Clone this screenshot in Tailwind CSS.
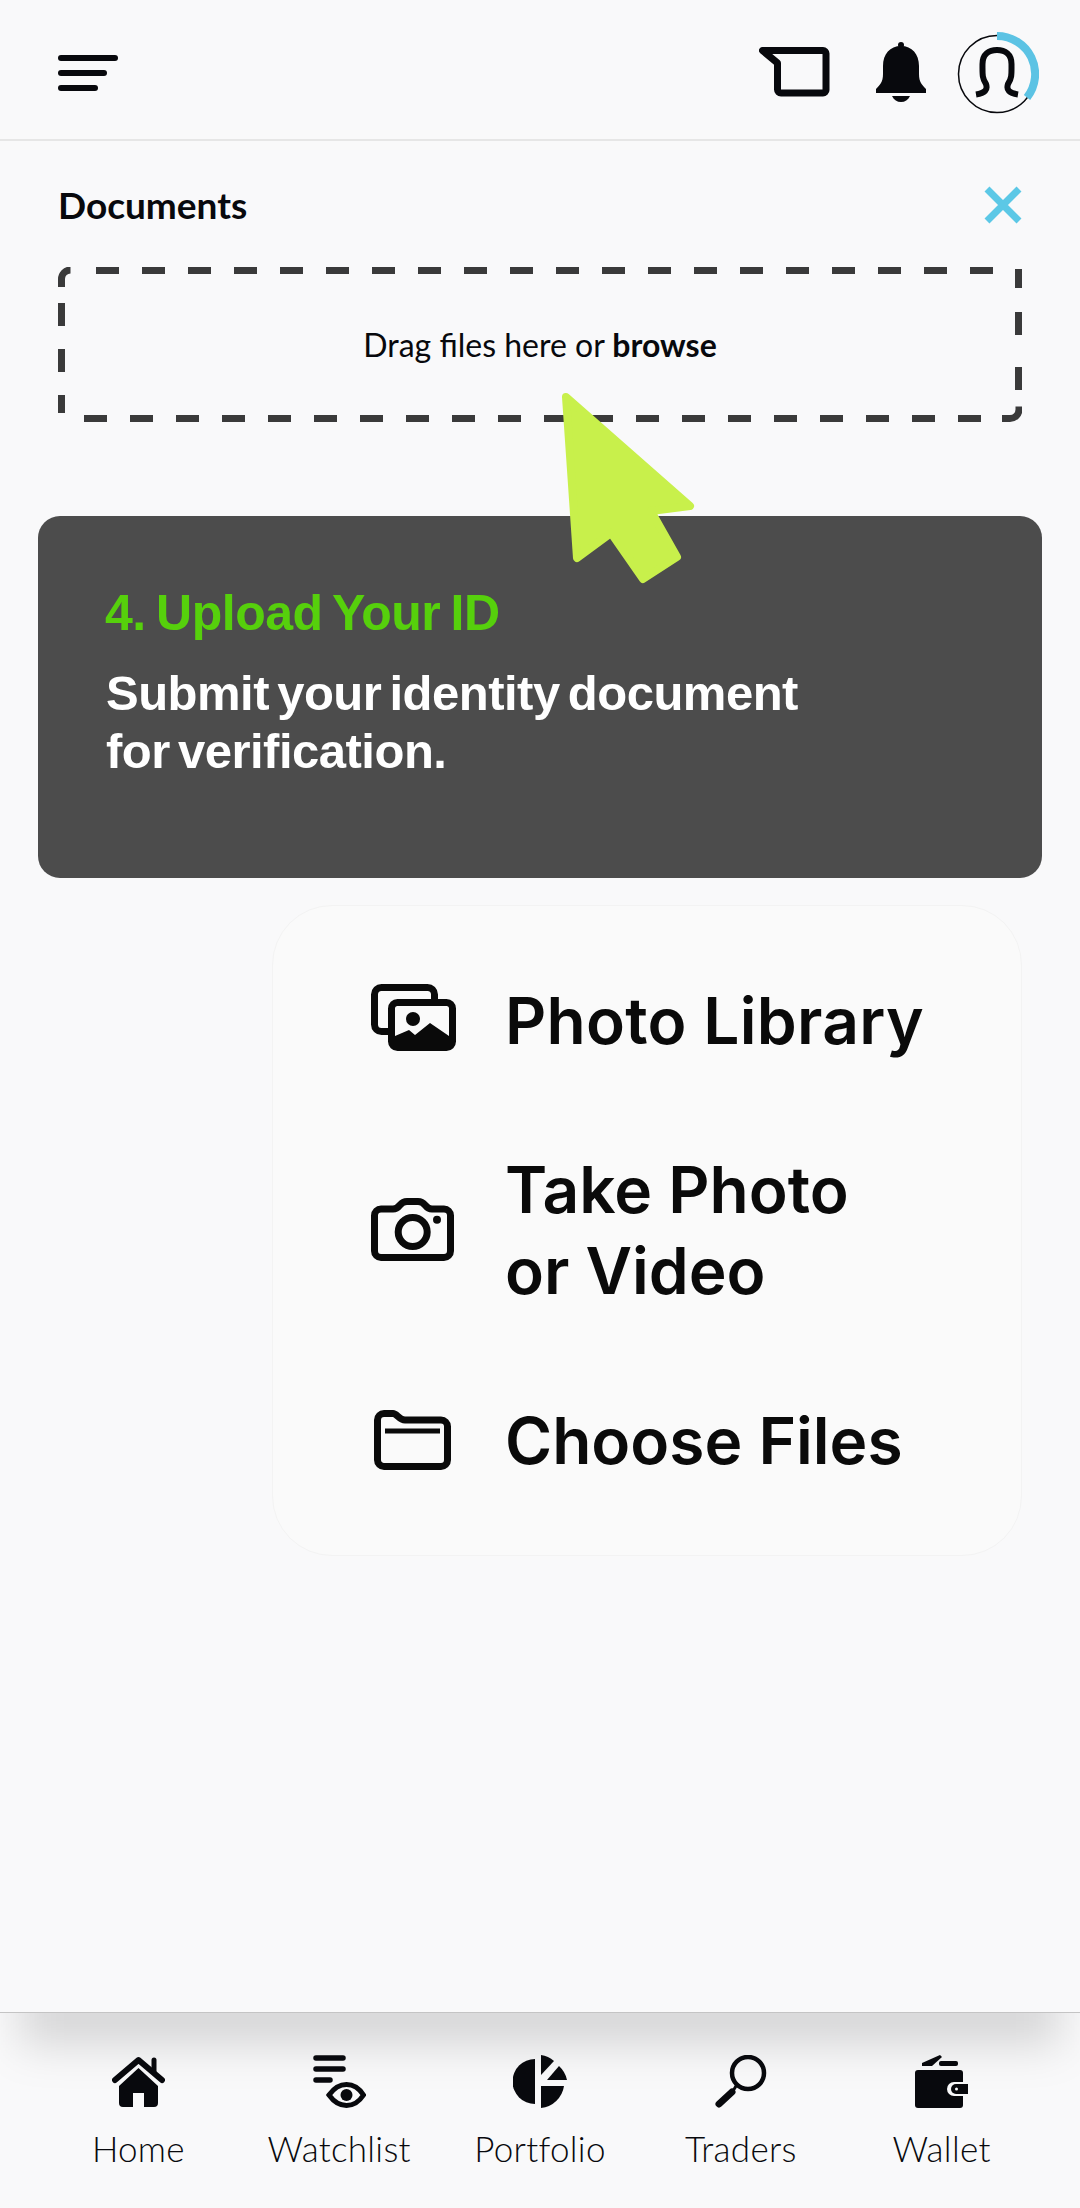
<!DOCTYPE html>
<html lang="en">
<head>
  <meta charset="UTF-8" />
  <meta name="viewport" content="width=device-width, initial-scale=1" />
  <title>Documents</title>
  <script src="https://cdn.jsdelivr.net/npm/@tailwindcss/browser@4"></script>
</head>
<body class="bg-[#f9f9fa] font-['Lato','Noto_Sans',sans-serif] text-[#08090d]">
<div class="relative flex flex-col h-[2208px] w-[1080px] overflow-hidden">

  <!-- Header -->
  <header class="h-[141px] shrink-0 border-b-2 border-[#e6e6e6] flex items-center pl-[58px] pr-[41px]">
    <div class="flex flex-col gap-[9px] mt-[6px]">
      <div class="h-[6px] w-[60px] rounded-full bg-[#08090d]"></div>
      <div class="h-[6px] w-[49px] rounded-full bg-[#08090d]"></div>
      <div class="h-[6px] w-[40px] rounded-full bg-[#08090d]"></div>
    </div>
    <div class="ml-auto flex items-center mt-[8px]">
      <svg class="w-[71px] h-[50px] mr-[46px] -mt-[4px]" viewBox="0 0 71 50" fill="none" stroke="#08090d" stroke-width="7" stroke-linejoin="round">
        <path d="M3.5 3.5H64a3 3 0 0 1 3 3V43a3 3 0 0 1-3 3H22a3.5 3.5 0 0 1-3.5-3.5V16Z"/>
      </svg>
      <svg class="w-[50px] h-[60px] mr-[29px] -mt-[4px]" viewBox="0 0 50 60" fill="#08090d">
        <circle cx="25" cy="3" r="3"/>
        <path d="M25 4C36 4 43 12 43 24V32C43 40 46 43 50 47a2 2 0 0 1-1 4H1a2 2 0 0 1-1-4C4 43 7 40 7 32V24C7 12 14 4 25 4Z"/>
        <path d="M16 54H34C32 58 29 60 25 60C21 60 18 58 16 54Z"/>
      </svg>
      <svg class="w-[84px] h-[84px]" viewBox="-42 -42 84 84" fill="none">
        <circle r="38.5" stroke="#08090d" stroke-width="1.5"/>
        <path d="M0-38A38 38 0 0 1 30 23.5" stroke="#5cc3e4" stroke-width="8"/>
        <path d="M-21 20.5C-12 19-9 16-11 10C-15 4-14.5 0-14.5-10C-14.5-20-8-24 0-24C8-24 14.5-20 14.5-10C14.5 0 15 4 11 10C9 16 12 19 21 20.5" stroke="#08090d" stroke-width="6"/>
      </svg>
    </div>
  </header>

  <!-- Documents -->
  <section class="px-[58px] pt-[44px]">
    <div class="flex items-center justify-between h-[40px]">
      <h2 class="text-[37px] font-bold">Documents</h2>
      <svg class="w-[38px] h-[38px]" viewBox="0 0 38 38" fill="none" stroke="#5cc8e6" stroke-width="7">
        <path d="M3 3L35 35M35 3L3 35"/>
      </svg>
    </div>
    <div class="relative mt-[42px] h-[155px] flex items-center justify-center text-[32px]">
      <svg class="absolute inset-0 w-[964px] h-[155px]" viewBox="0 0 964 155" fill="none" stroke="#3a3a3a" stroke-width="7">
        <path d="M3.5 20V12a9 9 0 0 1 9-9" />
        <path d="M38 3.5H936" stroke-dasharray="23 23"/>
        <path d="M960.5 2V21"/>
        <path d="M960.5 45V68M960.5 100V123"/>
        <path d="M3.5 36V59M3.5 82V105M3.5 128V146"/>
        <path d="M26 151.5H942" stroke-dasharray="23 23"/>
        <path d="M944 151.5h8a9 9 0 0 0 9-9v-3"/>
      </svg>
      <p>Drag files here or <b>browse</b></p>
    </div>
  </section>

  <!-- Tooltip -->
  <section class="mx-[38px] mt-[94px] h-[362px] rounded-[22px] bg-[#4c4c4c] pl-[68px] pt-[69px] font-['Liberation_Sans',sans-serif] font-bold">
    <h3 class="text-[50px] leading-[56px] tracking-[-0.5px] [word-spacing:-3px] -ml-[1px] text-[#56d00c]">4. Upload Your ID</h3>
    <p class="mt-[23px] text-[49px] leading-[58px] tracking-[-0.5px] [word-spacing:-5px] text-white">Submit your identity document<br />for verification.</p>
  </section>

  <!-- Upload options -->
  <section class="ml-[272px] mr-[58px] mt-[27px] h-[651px] rounded-[60px] border border-[#f3f3f3] bg-[#fafafa] pl-[98px] font-['Inter',sans-serif] font-semibold text-[64px] leading-[81px] text-[#0a0a0a]">
    <div class="h-[229px] flex items-center gap-[49px]">
      <svg class="w-[85px] h-[67px] shrink-0 -mt-[6px]" viewBox="0 0 85 67" fill="none" stroke="#0a0a0a" stroke-width="7">
        <rect x="3.5" y="3.5" width="60" height="44" rx="7"/>
        <rect x="20.5" y="18.5" width="61" height="45" rx="6" fill="#fafafa"/>
        <path d="M24 52L38 46L44 51L59 39L78 52V60H24Z" fill="#0a0a0a" stroke="none"/>
        <circle cx="42" cy="35" r="7" fill="#0a0a0a" stroke="none"/>
      </svg>
      <span class="tracking-[0.3px]">Photo Library</span>
    </div>
    <div class="h-[190px] flex items-center gap-[51px]">
      <svg class="w-[83px] h-[63px] shrink-0 -mt-[2px]" viewBox="0 0 83 63" fill="none" stroke="#0a0a0a" stroke-width="7">
        <path d="M10 11H22C25 11 27 9.5 29 7C31 4.5 33 3.5 36 3.5H47C50 3.5 52 4.5 54 7C56 9.5 58 11 61 11H73a6.5 6.5 0 0 1 6.5 6.5V53a6.5 6.5 0 0 1-6.5 6.5H10a6.5 6.5 0 0 1-6.5-6.5V17.5A6.5 6.5 0 0 1 10 11Z"/>
        <circle cx="41.7" cy="34" r="14.5"/>
        <circle cx="66" cy="21.7" r="4" fill="#0a0a0a" stroke="none"/>
      </svg>
      <span>Take Photo<br />or Video</span>
    </div>
    <div class="h-[230px] flex items-center gap-[54px] pl-[3px]">
      <svg class="w-[77px] h-[60px] shrink-0" viewBox="0 0 77 60" fill="none" stroke="#0a0a0a" stroke-width="7">
        <path d="M3.5 10a6.5 6.5 0 0 1 6.5-6.5H19C23 3.5 25 10 31 10H67a6.5 6.5 0 0 1 6.5 6.5V50a6.5 6.5 0 0 1-6.5 6.5H10a6.5 6.5 0 0 1-6.5-6.5Z"/>
        <path d="M11 21H66" stroke-width="5"/>
      </svg>
      <span>Choose Files</span>
    </div>
  </section>

  <!-- Bottom nav -->
  <nav class="mt-auto h-[196px] shrink-0 border-t border-[#c4c4c4] relative overflow-hidden">
    <div class="absolute -top-[30px] left-[20px] right-[20px] h-[62px] bg-black/[.14] blur-[22px]"></div>
    <div class="relative grid grid-cols-5 px-[38px] pt-[42px] text-[35px] leading-[40px] tracking-[0.3px] font-light text-center">
      <div class="flex flex-col items-center">
        <svg class="w-[53px] h-[53px]" viewBox="0 0 53 53" fill="#08090d">
          <path d="M3 25L26.5 5L50 25" fill="none" stroke="#08090d" stroke-width="6" stroke-linecap="round" stroke-linejoin="round"/>
          <path d="M42 5V16" stroke="#08090d" stroke-width="5" stroke-linecap="round"/>
          <path d="M7 31L26.5 13L46 31V48a4 4 0 0 1-4 4H32V38H21V52H11a4 4 0 0 1-4-4Z"/>
        </svg>
        <span class="mt-[20px]">Home</span>
      </div>
      <div class="flex flex-col items-center">
        <svg class="w-[53px] h-[53px]" viewBox="0 0 53 53" fill="none" stroke="#08090d">
          <path d="M3 3H30M3 14H30M3 25H17" stroke-width="5.5" stroke-linecap="round"/>
          <path d="M16 40C21 33 27 29.5 33.5 29.5C40 29.5 46 33 50.5 40C46 47 40 50.5 33.5 50.5C27 50.5 21 47 16 40Z" stroke-width="5"/>
          <circle cx="33.5" cy="40" r="6" fill="#08090d" stroke="none"/>
        </svg>
        <span class="mt-[20px]">Watchlist</span>
      </div>
      <div class="flex flex-col items-center">
        <svg class="w-[54px] h-[53px]" viewBox="0 0 54 53" fill="#08090d">
          <path d="M22 4A22.5 22.5 0 0 0 22 49Z"/>
          <path d="M28 0A26 26 0 0 1 41 6L28 20Z"/>
          <path d="M34 25L46 11A26 26 0 0 1 54 25Z"/>
          <path d="M28 31H51A26 26 0 0 1 28 53Z"/>
        </svg>
        <span class="mt-[20px]">Portfolio</span>
      </div>
      <div class="flex flex-col items-center">
        <svg class="w-[53px] h-[53px]" viewBox="0 0 53 53" fill="none" stroke="#08090d">
          <circle cx="34" cy="18" r="16" stroke-width="4.5"/>
          <path d="M22 31L19 36" stroke-width="3"/>
          <path d="M18 37L5 49" stroke-width="7" stroke-linecap="round"/>
        </svg>
        <span class="mt-[20px]">Traders</span>
      </div>
      <div class="flex flex-col items-center">
        <svg class="w-[53px] h-[53px]" viewBox="0 0 53 53" fill="#08090d">
          <path d="M7 11V8L25 0L27 2L17 11Z"/>
          <rect x="24" y="6" width="19" height="5" rx="2"/>
          <rect x="0" y="15" width="48" height="38" rx="3"/>
          <rect x="32" y="27" width="23" height="14" rx="7" fill="#f9f9fa"/>
          <path d="M41 29H53V39H41a5 5 0 0 1 0-10Z"/>
          <circle cx="41.5" cy="34" r="1.5" fill="#f9f9fa"/>
        </svg>
        <span class="mt-[20px]">Wallet</span>
      </div>
    </div>
  </nav>

  <!-- Pointer -->
  <svg class="absolute left-[560px] top-[388px] w-[140px] h-[200px]" viewBox="560 388 140 200" fill="#c8f04b" stroke="#c8f04b" stroke-width="8" stroke-linejoin="round">
    <path d="M566 397L690 506L651 511L677 557L643 579L611 533L577 558Z"/>
  </svg>
</div>
</body>
</html>
